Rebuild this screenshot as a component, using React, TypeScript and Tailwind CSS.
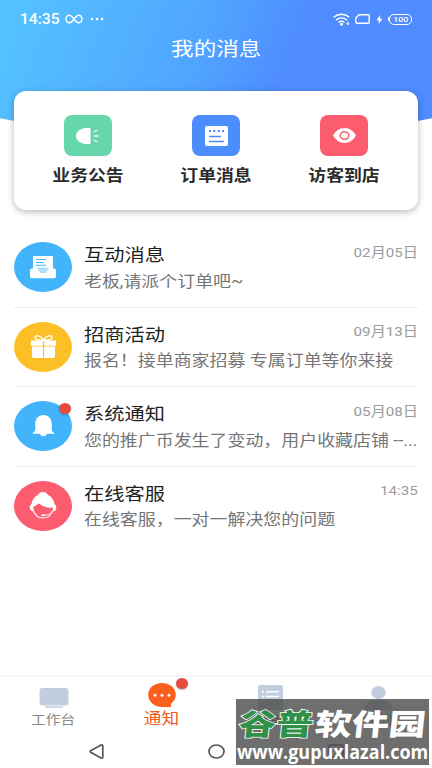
import type { ReactNode } from "react";
import clsx from "clsx";

interface Message {
  id: string;
  title: string;
  text: string;
  time: string;
  color: string;
  icon: ReactNode;
  unread?: boolean;
}

function MegaphoneIcon() {
  return (
    <svg width="24" height="18" viewBox="0 0 24 18" fill="none">
      <path d="M14.500 1v16H9.500C4 16.500 0 13 0 9s4-7.500 9.500-8z" fill="#fff" />
      <path d="M17.500 5l4-2M18 9h4.500M17.500 13l4 2" stroke="#fff" strokeWidth="1.300" />
    </svg>
  );
}

function OrderIcon() {
  return (
    <svg width="23" height="20" viewBox="0 0 23 20" fill="none">
      <rect width="23" height="20" rx="2" fill="#fff" />
      <path d="M4 5h2M8.300 5h2M12.700 5h2M17 5h2" stroke="#4d8cfd" strokeWidth="1.800" />
      <path d="M4 10.500h12M4 15.500h15" stroke="#4d8cfd" strokeWidth="1.300" />
    </svg>
  );
}

function EyeIcon() {
  return (
    <svg width="23" height="15" viewBox="0 0 23 15" fill="none">
      <path d="M0 7.500C2.500 3 6.500 0 11.500 0S20.500 3 23 7.500C20.500 12 16.500 15 11.500 15S2.500 12 0 7.500z" fill="#fff" />
      <ellipse cx="11.500" cy="7.500" rx="4.300" ry="3.700" stroke="#fb5c6e" strokeWidth="1.500" />
    </svg>
  );
}

function InboxIcon() {
  return (
    <svg width="26" height="23" viewBox="0 0 26 23" fill="none">
      <rect x="3" y="0" width="20" height="16" rx="1" fill="#fff" />
      <path d="M6 3.500h10M6 6.500h8M6 9.300h10" stroke="#41b4fb" strokeWidth="1" />
      <path d="M2 12.500h5c1 3 3 4.500 6 4.500s5-1.500 6-4.500h5c1.200 0 2 .8 2 2V20c0 1.500-.8 2.300-2 2.300H2C.8 22.300 0 21.500 0 20v-5.500c0-1.200.8-2 2-2z" fill="#fff" />
      <path d="M7 11.500c1 3.500 3 5.500 6 5.500s5-2 6-5.500z" fill="#b3dffd" />
    </svg>
  );
}

function GiftIcon() {
  return (
    <svg width="27" height="24" viewBox="0 0 27 24" fill="none">
      <path d="M13.500 5.500C11.500 1 6.500-.5 5 2c-1 2.500 4 3.500 8.500 3.500zM13.500 5.500C15.500 1 20.500-.5 22 2c1 2.500-4 3.500-8.500 3.500z" stroke="#fff" strokeWidth="1.300" />
      <path d="M1.500 5.500h11.300v5.300H.8V6.500c0-.6.200-1 .7-1zM14.200 5.500h11.300c.5 0 .7.400.7 1v4.300h-12z" fill="#fff" />
      <path d="M2 11.500h10.900V23H4c-1.300 0-2-.8-2-2zM14.100 11.500H25V21c0 1.200-.7 2-2 2h-8.900z" fill="#fff" />
    </svg>
  );
}

function BellIcon() {
  return (
    <svg width="23" height="22" viewBox="0 0 23 22" fill="#fff">
      <path d="M11.500 0c4.800 0 8.300 3.800 8.300 9v5.500c0 1.500 1 2.500 2.500 3.500v.7H.7V18c1.500-1 2.500-2 2.500-3.500V9c0-5.200 3.500-9 8.300-9z" />
      <path d="M8 18h7c0 2-1.500 3.300-3.500 3.300S8 20 8 18z" />
    </svg>
  );
}

function ServiceIcon() {
  return (
    <svg width="28" height="28" viewBox="0 0 28 28" fill="none">
      <path d="M14 0c2.500 0 4.300 1.200 4.700 2.800C22.500 4.500 25 8 25.500 12c1.300.8 1.800 2 1.800 3.500 0 2-1 3.500-2.600 3.800-1 .2-1.200-.7-.9-2 .1-.6.1-1.200 0-1.800-5 .9-10-.8-13.800-4C8.500 12.500 6 14 4.500 14.500c-.2 1 0 2.400.4 3.700.2 1-.4 1.400-1.400 1C1.700 18.500.7 17 .7 15.300c0-1.500.6-2.500 1.800-3.300C3 8 5.500 4.500 9.300 2.800 9.700 1.200 11.500 0 14 0z" fill="#fff" />
      <path d="M4.300 18.500c1.700 4.800 5.200 7.500 9.700 7.500 4.600 0 8-2.700 9.500-7.200" stroke="#fff" strokeWidth="1.100" />
      <path d="M23.800 19c-1.800 2.800-4.500 4-8.500 4.200" stroke="#fff" strokeWidth=".8" />
      <ellipse cx="14.300" cy="23.200" rx="2" ry="1" fill="#fff" />
    </svg>
  );
}

const shortcuts = [
  { label: "业务公告", color: "bg-[#66d6ab]", icon: <MegaphoneIcon /> },
  { label: "订单消息", color: "bg-[#4d8cfd]", icon: <OrderIcon /> },
  { label: "访客到店", color: "bg-[#fb5c6e]", icon: <EyeIcon /> },
];

const messages: Message[] = [
  { id: "interact", title: "互动消息", text: "老板,请派个订单吧~", time: "02月05日", color: "bg-[#41b4fb]", icon: <InboxIcon /> },
  { id: "activity", title: "招商活动", text: "报名！接单商家招募 专属订单等你来接", time: "09月13日", color: "bg-[#fcc026]", icon: <GiftIcon /> },
  { id: "system", title: "系统通知", text: "您的推广币发生了变动，用户收藏店铺 --...", time: "05月08日", color: "bg-[#41b4fb]", icon: <BellIcon />, unread: true },
  { id: "service", title: "在线客服", text: "在线客服，一对一解决您的问题", time: "14:35", color: "bg-[#fb5c6e]", icon: <ServiceIcon /> },
];

function StatusBar() {
  return (
    <div className="flex h-9 items-center justify-between pt-0.5 pr-5 pl-5 text-white">
      <div className="flex items-center">
        <span className="w-[45px] origin-left scale-x-[1.13] pt-px font-[Roboto] text-[13.8px] leading-none font-medium">14:35</span>
        <svg width="18" height="10" viewBox="0 0 18 10" fill="none" stroke="#fff" strokeWidth="1.500">
          <path d="M9 5C7 2.500 6 1.200 4.300 1.200S1 2.800 1 5s1.600 3.800 3.300 3.800S7 7.500 9 5s3-3.800 4.700-3.800S17 2.800 17 5s-1.600 3.800-3.300 3.800S11 7.500 9 5z" />
        </svg>
        <svg className="ml-[7px]" width="14" height="4" viewBox="0 0 14 4" fill="#fff">
          <circle cx="2" cy="2" r="1.300" />
          <circle cx="7" cy="2" r="1.300" />
          <circle cx="12" cy="2" r="1.300" />
        </svg>
      </div>
      <div className="flex items-center">
        <svg width="17" height="13" viewBox="0 0 17 13" fill="none" stroke="#fff" strokeWidth="1.500">
          <path d="M.7 4.300c4.500-4 11-4 15.500 0M3 7c3.200-2.800 7.700-2.800 11 0M5.500 9.500c1.800-1.500 4.200-1.500 6 0" />
          <circle cx="8.500" cy="11.300" r=".8" fill="#fff" />
          <path d="M14.800 8.500v3M13.500 10.300l1.300 1.500 1.300-1.500" strokeWidth="1" />
        </svg>
        <svg className="ml-[5px]" width="15" height="10" viewBox="0 0 15 10" fill="none" stroke="#fff" strokeWidth="1.400">
          <path d="M4 .8h9c.8 0 1.200.4 1.200 1.200v6c0 .8-.4 1.200-1.200 1.200H2C1.200 9.200.8 8.800.8 8V4z" />
        </svg>
        <svg className="ml-1.5" width="7" height="9" viewBox="0 0 7 10" fill="#fff">
          <path d="M4.500 0L0 5.800h2.800L2.200 10 7 4.200H4z" />
        </svg>
        <div className="ml-[5px] h-1 w-px bg-white" />
        <div className="flex h-[11px] w-[23px] items-center justify-center rounded-[5px] border border-white">
          <span className="scale-x-[1.1] pt-px font-[Roboto] text-[8px] leading-none font-medium">100</span>
        </div>
      </div>
    </div>
  );
}

function MessageRow({ message, last }: { message: Message; last: boolean }) {
  return (
    <div className={clsx("flex h-[79.5px] items-center border-b", last ? "border-transparent" : "border-[#ececec]")}>
      <div className={clsx("relative flex h-[50px] w-[58px] shrink-0 items-center justify-center rounded-[50%]", message.color)}>
        {message.icon}
        {message.unread && (
          <span className="absolute top-0.5 right-px h-[11px] w-3 rounded-[50%] bg-[#e64b40] shadow-[0_1px_2px_rgba(0,0,0,0.25)]" />
        )}
      </div>
      <div className="ml-3 min-w-0 flex-1 pt-1">
        <div className="flex h-[26px] items-center justify-between">
          <span className="origin-left scale-x-[1.15] text-[17.6px] whitespace-nowrap text-[#1f1f1f]">{message.title}</span>
          <span className="-mt-[5px] origin-right scale-x-[1.15] text-[13.2px] whitespace-nowrap text-[#9b9b9b]">{message.time}</span>
        </div>
        <div className="flex h-[28px] items-center">
          <span className="origin-left scale-x-[1.15] text-[15.6px] whitespace-nowrap text-[#757575]">{message.text}</span>
        </div>
      </div>
    </div>
  );
}

function TabBar() {
  return (
    <nav className="grid h-[59px] grid-cols-4 border-t-2 border-[#f6f6f6]">
      <div className="flex flex-col items-center pt-2.5">
        <svg width="30" height="22" viewBox="0 0 30 22" fill="#c3cde0">
          <rect x=".5" y="1" width="29" height="17.500" rx="3" />
          <rect x="6" y="19.300" width="18" height="1.500" />
        </svg>
        <span className="mt-0.5 mr-px scale-x-[1.15] text-[12.8px] leading-[18px] text-[#8a8a8a]">工作台</span>
      </div>
      <div className="flex flex-col items-center pt-1.5">
        <div className="relative">
          <svg width="28" height="24" viewBox="0 0 28 24">
            <path d="M14 0c7.700 0 13.800 5 13.800 11.800 0 3.700-1.800 6.500-4.800 8.700V24h-9C6.300 24 .2 18.600.2 11.800S6.300 0 14 0z" fill="#fc5f1c" />
            <g fill="#fff">
              <circle cx="7" cy="12.200" r="1.500" />
              <circle cx="14" cy="12.200" r="1.500" />
              <circle cx="21" cy="12.200" r="1.500" />
            </g>
          </svg>
          <span className="absolute -top-[5px] -right-3 h-[11px] w-3 rounded-[50%] bg-[#e64b40] shadow-[0_1px_2px_rgba(0,0,0,0.25)]" />
        </div>
        <span className="mt-0.5 mr-px scale-x-[1.15] text-[15.4px] leading-[20px] text-[#f15a1d]">通知</span>
      </div>
      <div className="flex flex-col items-center pt-2">
        <svg width="25" height="25" viewBox="0 0 25 25" fill="none">
          <rect width="25" height="25" rx="2" fill="#c3cde0" />
          <path d="M4 6.800h2M8 6.800h13M4 11.500h2M8 11.500h13" stroke="#fff" strokeWidth="1.500" />
        </svg>
        <span className="mt-px scale-x-[1.15] text-[12.8px] leading-[18px] text-[#8a8a8a]">订单</span>
      </div>
      <div className="flex flex-col items-center pt-[9px]">
        <svg width="27" height="24" viewBox="0 0 27 24" fill="#c3cde0">
          <ellipse cx="13.500" cy="6.500" rx="7.300" ry="6.500" />
          <path d="M0 24c0-6 4-10 9-10h9c5 0 9 4 9 10z" />
        </svg>
        <span className="mt-px scale-x-[1.15] text-[12.8px] leading-[18px] text-[#8a8a8a]">我的</span>
      </div>
    </nav>
  );
}

function SystemNav() {
  return (
    <div className="flex h-[34px] items-center justify-between pr-[88px] pl-[89px]">
      <svg width="15" height="15" viewBox="0 0 15 15" fill="none" stroke="#555" strokeWidth="1.700">
        <path d="M13.800 2v11c0 1-.8 1.400-1.700.9L2 8.500c-1-.6-1-1.400 0-2L12.100 1.100c.9-.5 1.700-.1 1.700.9z" />
      </svg>
      <svg width="17" height="15" viewBox="0 0 17 15" fill="none" stroke="#555" strokeWidth="1.700">
        <ellipse cx="8.500" cy="7.500" rx="7.500" ry="6.500" />
      </svg>
      <svg width="16" height="14" viewBox="0 0 16 14" fill="none" stroke="#555" strokeWidth="1.700">
        <rect x="1" y="1" width="14" height="12" rx="2" />
      </svg>
    </div>
  );
}

function Watermark() {
  return (
    <div className="absolute top-[699px] left-[236px] h-[66px] w-[193px] bg-[#4a4a4a]/80 text-white">
      <div className="ml-[3px] flex h-[34px] origin-left translate-y-[10px] -skew-x-6 items-center text-[29.5px] leading-none font-black whitespace-nowrap">
        <span className="w-[76px] origin-left scale-x-[1.26] text-[#2f9148] [-webkit-text-stroke:1.5px_#fff] [paint-order:stroke_fill]">谷普</span>
        <span className="origin-left scale-x-[1.25]">软件园</span>
      </div>
      <div className="mt-[10px] ml-px w-[190px]">
        <div className="w-max origin-left scale-x-[0.945] font-['Open_Sans'] text-[19px] leading-[18px] font-bold whitespace-nowrap">www.gupuxlazal.com</div>
      </div>
    </div>
  );
}

export default function App() {
  return (
    <div className="relative flex h-[768px] w-[432px] flex-col overflow-hidden bg-white font-[Roboto,'Noto_Sans_CJK_SC',sans-serif]">
      <header className="h-[140px] shrink-0 bg-[linear-gradient(110deg,#54c4ff_0%,#50a5ff_45%,#4f8cff_65%,#4f8cff_100%)] [clip-path:circle(1080px_at_216px_-940px)]">
        <StatusBar />
        <h1 className="flex h-[28px] items-center justify-center text-[19.6px] text-white">
          <span className="scale-x-[1.15]">我的消息</span>
        </h1>
      </header>

      {/* Shortcut card */}
      <section className="relative mx-3.5 -mt-[49px] grid h-[119px] shrink-0 grid-cols-3 rounded-[12px] bg-white px-2.5 shadow-[0_2px_7px_rgba(0,0,0,0.28)]">
        {shortcuts.map((item) => (
          <div key={item.label} className="flex flex-col items-center pt-6">
            <div className={clsx("flex h-[41px] w-12 items-center justify-center rounded-lg", item.color)}>{item.icon}</div>
            <span className="mt-[9px] scale-x-[1.15] text-[15.5px] leading-[22px] font-bold whitespace-nowrap text-[#2b2b2b]">{item.label}</span>
          </div>
        ))}
      </section>

      {/* Messages */}
      <main className="mx-3.5 mt-[18px] flex-1">
        {messages.map((message, index) => (
          <MessageRow key={message.id} message={message} last={index === messages.length - 1} />
        ))}
      </main>

      <TabBar />
      <SystemNav />
      <Watermark />
    </div>
  );
}
